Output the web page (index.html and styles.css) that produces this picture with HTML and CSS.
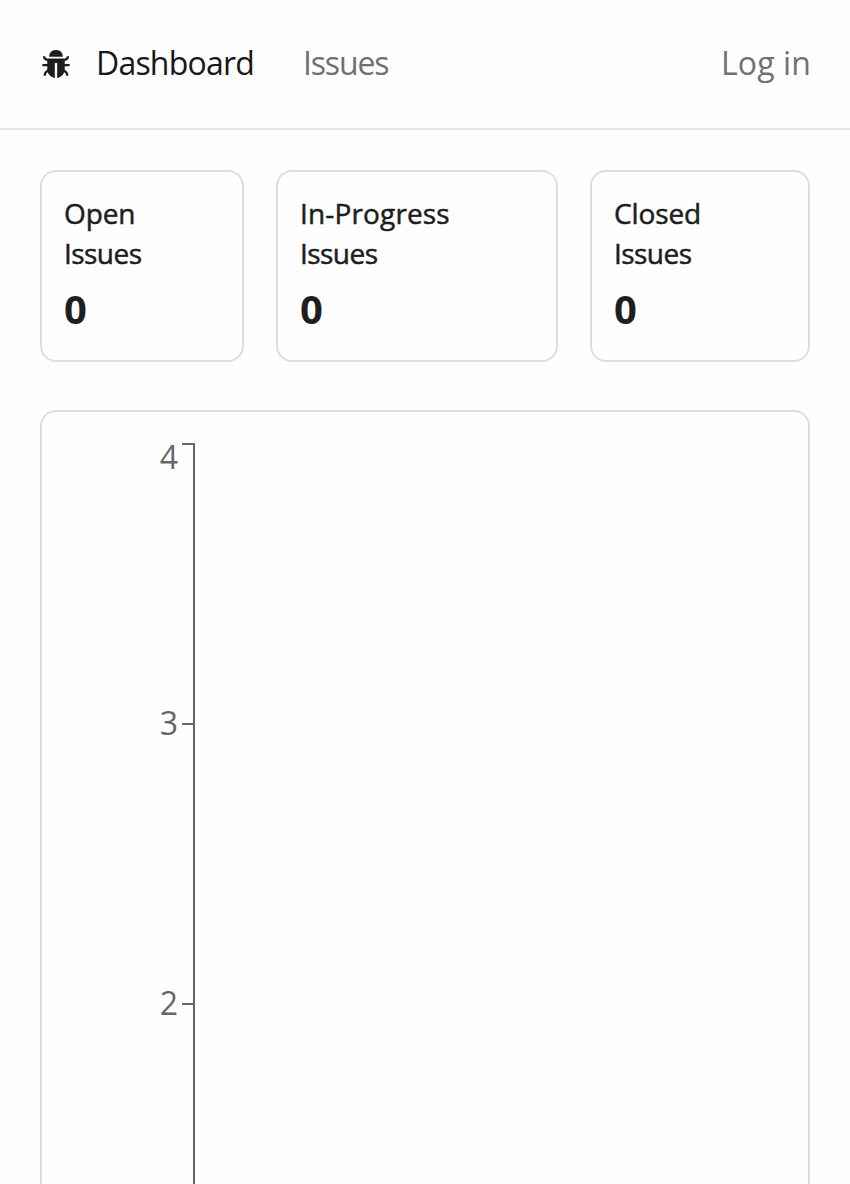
FILE: index.html
```html
<!DOCTYPE html>
<html lang="en">
<head>
<meta charset="utf-8">
<title>Dashboard</title>
<link rel="stylesheet" href="styles.css">
</head>
<body>
<nav class="navbar">
  <a class="brand" aria-label="Home">
    <svg class="bug" viewBox="0 0 1024 1024" width="32" height="32" fill="currentColor">
      <path d="M304 280h416c4.400 0 8-3.600 8-8 0-40-8.800-76.700-25.900-108.100a184.310 184.310 0 0 0-74-74C596.700 72.800 560 64 520 64h-16c-40 0-76.700 8.800-108.100 25.900a184.310 184.310 0 0 0-74 74C304.800 195.300 296 232 296 272c0 4.400 3.600 8 8 8z"/>
      <path d="M940 512H792V412c76.800 0 139-62.200 139-139 0-4.400-3.600-8-8-8h-60c-4.400 0-8 3.600-8 8a63 63 0 0 1-63 63H232a63 63 0 0 1-63-63c0-4.400-3.600-8-8-8h-60c-4.400 0-8 3.600-8 8 0 76.800 62.200 139 139 139v100H84c-4.400 0-8 3.600-8 8v56c0 4.400 3.600 8 8 8h148v96c0 6.500.2 13 .7 19.300C164.100 728.600 116 796.700 116 876c0 4.400 3.600 8 8 8h56c4.400 0 8-3.600 8-8 0-44.200 23.900-82.900 59.600-103.700a273 273 0 0 0 22.700 49c24.300 41.500 59 76.200 100.500 100.500 28.900 16.900 61 28.800 95.300 34.500 4.400 0 8-3.600 8-8V484c0-4.400 3.600-8 8-8h60c4.400 0 8 3.600 8 8v464.200c0 4.400 3.600 8 8 8 34.300-5.700 66.400-17.600 95.300-34.500a281.380 281.380 0 0 0 123.200-149.500A120.400 120.400 0 0 1 836 876c0 4.400 3.600 8 8 8h56c4.400 0 8-3.600 8-8 0-79.300-48.100-147.400-116.700-176.700.4-6.400.7-12.800.7-19.300v-96h148c4.400 0 8-3.600 8-8v-56c0-4.400-3.600-8-8-8z"/>
    </svg>
  </a>
  <a class="link active">Dashboard</a>
  <a class="link issues">Issues</a>
  <a class="link login">Log in</a>
</nav>
<main class="content">
  <section class="summary">
    <article class="card">
      <h2 class="label">Open<br><span class="noun">Issues</span></h2>
      <p class="count">0</p>
    </article>
    <article class="card">
      <h2 class="label progress">In-Progress<br><span class="noun">Issues</span></h2>
      <p class="count">0</p>
    </article>
    <article class="card">
      <h2 class="label">Closed<br><span class="noun">Issues</span></h2>
      <p class="count">0</p>
    </article>
  </section>
  <section class="chart-card">
    <svg class="chart" viewBox="0 0 764 772" width="764" height="772">
      <path class="axis" d="M140 32h12v740M140 312h12M140 592h12"/>
      <g class="ticks">
        <text x="136" y="57">4</text>
        <text x="136" y="323">3</text>
        <text x="136" y="603">2</text>
      </g>
    </svg>
  </section>
</main>
</body>
</html>
```
FILE: styles.css
```css
* { box-sizing: border-box; }
body {
  margin: 0;
  background: #fefefe;
  color: #1d1e20;
  font-family: "Open Sans", "Noto Sans", sans-serif;
}
.navbar {
  display: flex;
  align-items: center;
  height: 130px;
  padding: 0 40px 2px;
  border-bottom: 2px solid #e4e4e4;
}
.brand { display: flex; margin: 2px 24px 0 0; }
.bug { display: block; }
.link {
  font-size: 32px;
  line-height: 48px;
  white-space: nowrap;
  color: #6f7177;
}
.active { color: #18181b; letter-spacing: -0.8px; }
.issues { margin-left: 49px; letter-spacing: -1.15px; }
.login { margin-left: auto; margin-right: -1px; letter-spacing: 0.1px; }
.content { padding: 40px 40px 0; }
.summary {
  display: grid;
  grid-template-columns: 204px 282px 220px;
  gap: 32px;
  margin-bottom: 48px;
}
.card {
  height: 192px;
  padding: 21px 22px;
  border: 2px solid #dedede;
  border-radius: 16px;
}
.label {
  margin: 0;
  font-size: 28px;
  font-weight: 500;
  line-height: 40px;
  letter-spacing: -0.1px;
  -webkit-text-stroke: 0.5px currentColor;
}
.progress { letter-spacing: 0.15px; }
.noun { letter-spacing: -0.55px; }
.count {
  margin: 6px 0 0;
  font-size: 40px;
  font-weight: 700;
  line-height: 60px;
}
.chart-card {
  border: 2px solid #dedede;
  border-bottom: 0;
  border-radius: 16px 16px 0 0;
}
.chart { display: block; }
.axis { fill: none; stroke: #666; stroke-width: 2; }
.ticks { fill: #666; font-size: 32px; text-anchor: end; }
```
